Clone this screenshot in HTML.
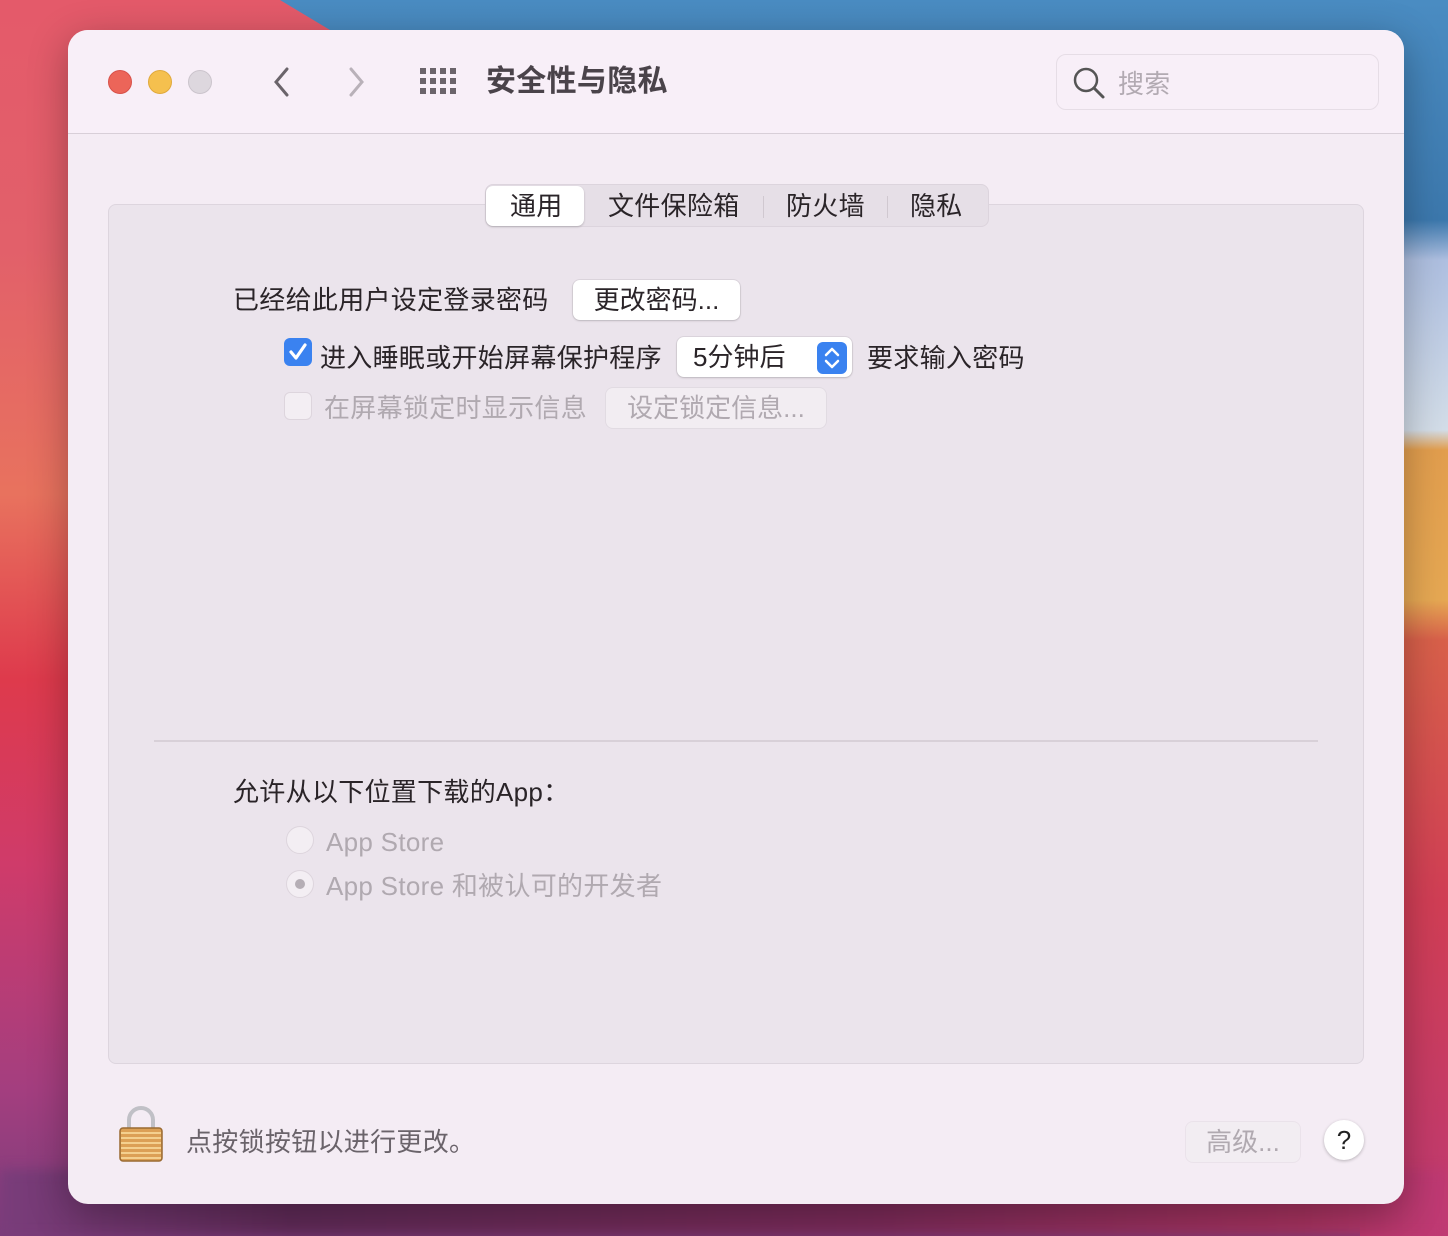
<!DOCTYPE html>
<html><head><meta charset="utf-8"><style>
*{margin:0;padding:0;box-sizing:border-box}
body{width:1448px;height:1236px;overflow:hidden;position:relative;font-family:"Liberation Sans","Noto Sans CJK SC",sans-serif;color:#2a2428;
background:linear-gradient(180deg,#e45a6a 0%,#e2606a 20%,#e8725e 40%,#de3a4c 55%,#cf3b6a 70%,#a43e7f 88%,#7a3d7b 100%);}
.bgR{position:absolute;left:0;top:0;width:1448px;height:1236px;background:
linear-gradient(180deg,#4a8cc2 0px,#3c78ad 220px,#aebfe0 260px,#d3dde8 430px,#e29e4e 450px,#e6a853 600px,#d8604a 640px,#d13e55 900px,#bf3a72 1236px);
clip-path:polygon(280px 0,1448px 0,1448px 1236px,1360px 1236px,1360px 30px,330px 30px);}
.bgB{position:absolute;left:0;top:1170px;width:1448px;height:66px;background:linear-gradient(90deg,#7a3d7b,#5f2a57 20%,#7a2a58 60%,#a5325e 90%,#c03a74);filter:blur(6px)}
.win{position:absolute;left:68px;top:30px;width:1336px;height:1174px;border-radius:20px;background:#f4ecf4;overflow:hidden;box-shadow:0 10px 40px rgba(0,0,0,.3)}
.tb{position:absolute;left:0;top:0;width:100%;height:104px;background:#f8eff8;border-bottom:1px solid #d8cfd8}
.dot{position:absolute;top:40px;width:24px;height:24px;border-radius:50%}
.t{position:absolute;white-space:nowrap;font-size:26px;line-height:30px;letter-spacing:.3px}
.panel{position:absolute;left:40px;top:174px;width:1256px;height:860px;background:#ebe4ec;border:1px solid #ddd5de;border-radius:8px}
.btn{position:absolute;height:40px;background:#fff;border-radius:7px;box-shadow:0 0 0 1px rgba(0,0,0,.06),0 1px 2px rgba(0,0,0,.15);font-size:26px;line-height:40px;text-align:center;white-space:nowrap}
.dis{background:#f2edf2;color:#b0a9b0;box-shadow:0 0 0 1px rgba(0,0,0,.04)}
</style></head><body>
<div class="bgR"></div><div class="bgB"></div>
<div class="win">
 <div class="tb">
  <div class="dot" style="left:40px;background:#ec6559;border:1px solid #d8514a"></div>
  <div class="dot" style="left:80px;background:#f5c04e;border:1px solid #e0a93c"></div>
  <div class="dot" style="left:120px;background:#ddd7de;border:1px solid #cbc4cc"></div>
  <svg style="position:absolute;left:204px;top:36px" width="20" height="32"><path d="M15 3 L4 16 L15 29" stroke="#6b646b" stroke-width="3" fill="none" stroke-linecap="round"/></svg>
  <svg style="position:absolute;left:278px;top:36px" width="20" height="32"><path d="M5 3 L16 16 L5 29" stroke="#b9b1b9" stroke-width="3" fill="none" stroke-linecap="round"/></svg>
  <svg style="position:absolute;left:352px;top:38px" width="38" height="28" fill="#6b646b">
   <rect x="0" y="0" width="6" height="6"/><rect x="10" y="0" width="6" height="6"/><rect x="20" y="0" width="6" height="6"/><rect x="30" y="0" width="6" height="6"/>
   <rect x="0" y="10" width="6" height="6"/><rect x="10" y="10" width="6" height="6"/><rect x="20" y="10" width="6" height="6"/><rect x="30" y="10" width="6" height="6"/>
   <rect x="0" y="20" width="6" height="6"/><rect x="10" y="20" width="6" height="6"/><rect x="20" y="20" width="6" height="6"/><rect x="30" y="20" width="6" height="6"/></svg>
  <div class="t" style="left:418px;top:34px;font-size:30px;line-height:36px;font-weight:bold;color:#4a434a">安全性与隐私</div>
  <div style="position:absolute;left:988px;top:24px;width:323px;height:56px;border:1px solid #e6dde6;border-radius:10px;background:#f8eff8"></div>
  <svg style="position:absolute;left:1004px;top:36px" width="34" height="34"><circle cx="14" cy="14" r="11" stroke="#555" stroke-width="2.5" fill="none"/><path d="M22 22 L31 31" stroke="#555" stroke-width="3" stroke-linecap="round"/></svg>
  <div class="t" style="left:1050px;top:39px;color:#b2aab2">搜索</div>
 </div>
 <div class="panel"></div>
 <div style="position:absolute;left:417px;top:154px;width:504px;height:43px;background:#e6dfe7;border:1px solid #dcd4dd;border-radius:8px"></div>
 <div style="position:absolute;left:418px;top:156px;width:98px;height:40px;background:#fff;border-radius:7px;box-shadow:0 1px 2px rgba(0,0,0,.2)"></div>
 <div class="t" style="left:442px;top:161px">通用</div>
 <div class="t" style="left:540px;top:161px">文件保险箱</div>
 <div style="position:absolute;left:695px;top:166px;width:1px;height:22px;background:#d0c8d0"></div>
 <div class="t" style="left:718px;top:161px">防火墙</div>
 <div style="position:absolute;left:819px;top:166px;width:1px;height:22px;background:#d0c8d0"></div>
 <div class="t" style="left:842px;top:161px">隐私</div>

 <div class="t" style="left:165px;top:255px">已经给此用户设定登录密码</div>
 <div class="btn" style="left:505px;top:250px;width:167px">更改密码...</div>
 <div style="position:absolute;left:216px;top:308px;width:28px;height:28px;border-radius:6px;background:#3a82f0"></div>
 <svg style="position:absolute;left:216px;top:308px" width="28" height="28"><path d="M7 14 L12 20 L21 7" stroke="#fff" stroke-width="3.2" fill="none" stroke-linecap="round" stroke-linejoin="round"/></svg>
 <div class="t" style="left:252px;top:313px">进入睡眠或开始屏幕保护程序</div>
 <div class="btn" style="left:609px;top:307px;width:175px;text-align:left">
  <span style="position:absolute;left:16px;top:0">5分钟后</span>
  <div style="position:absolute;left:140px;top:5px;width:30px;height:32px;border-radius:6px;background:#3a82f0"></div>
  <svg style="position:absolute;left:140px;top:5px" width="30" height="32"><path d="M9 13 L15 7 L21 13 M9 19 L15 25 L21 19" stroke="#fff" stroke-width="2.5" fill="none" stroke-linecap="round" stroke-linejoin="round"/></svg>
 </div>
 <div class="t" style="left:799px;top:313px">要求输入密码</div>
 <div style="position:absolute;left:216px;top:362px;width:28px;height:28px;border-radius:6px;background:#f3eef3;border:1px solid #ddd5dd"></div>
 <div class="t" style="left:256px;top:363px;color:#b0a9b0">在屏幕锁定时显示信息</div>
 <div class="btn dis" style="left:538px;top:358px;width:220px">设定锁定信息...</div>

 <div style="position:absolute;left:86px;top:710px;width:1164px;height:2px;background:#d8d0d8"></div>
 <div class="t" style="left:165px;top:747px">允许从以下位置下载的App：</div>
 <div style="position:absolute;left:218px;top:796px;width:28px;height:28px;border-radius:50%;background:#f3eef3;border:1px solid #ddd5dd"></div>
 <div class="t" style="left:258px;top:797px;color:#b0a9b0">App Store</div>
 <div style="position:absolute;left:218px;top:840px;width:28px;height:28px;border-radius:50%;background:#f3eef3;border:1px solid #ddd5dd"></div>
 <div style="position:absolute;left:227px;top:849px;width:10px;height:10px;border-radius:50%;background:#b5aeb5"></div>
 <div class="t" style="left:258px;top:841px;color:#b0a9b0">App Store 和被认可的开发者</div>

 <svg style="position:absolute;left:50px;top:1076px" width="46" height="58">
  <path d="M11 24 V14 A12 12 0 0 1 35 14 V24" stroke="#c0c0c6" stroke-width="4" fill="none"/>
  <rect x="2" y="22" width="42" height="33" rx="3" fill="#dca055" stroke="#9a6a32" stroke-width="1.5"/>
  <g stroke="#f4d08e" stroke-width="2"><path d="M3 27H43M3 32H43M3 37H43M3 42H43M3 47H43M3 52H43"/></g>
 </svg>
 <div class="t" style="left:118px;top:1097px;color:#6a636a">点按锁按钮以进行更改。</div>
 <div class="btn dis" style="left:1118px;top:1092px;width:114px">高级...</div>
 <div style="position:absolute;left:1256px;top:1090px;width:40px;height:40px;border-radius:50%;background:#fff;box-shadow:0 1px 3px rgba(0,0,0,.25);font-size:26px;line-height:40px;text-align:center;color:#222">?</div>
</div>
</body></html>
